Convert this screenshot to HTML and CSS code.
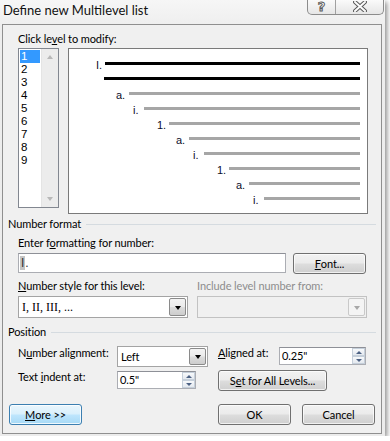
FILE: index.html
```html
<!DOCTYPE html>
<html>
<head>
<meta charset="utf-8">
<link rel="stylesheet" href="styles.css">
</head>
<body>
<div class="window">
  <div class="titlebar">
    <span class="title">Define new Multilevel list</span>
    <div class="caption">
      <div class="cap help">?</div>
      <div class="cap close">
        <svg width="14" height="11" viewBox="0 0 14 11">
          <path d="M2 1 L12 10 M12 1 L2 10" stroke="#5a5a5a" stroke-width="4" stroke-linecap="round"/>
          <path d="M2 1 L12 10 M12 1 L2 10" stroke="#fbfbfb" stroke-width="2" stroke-linecap="round"/>
        </svg>
      </div>
    </div>
  </div>
  <div class="client">
    <div class="lbl top-lbl">Click le<u>v</u>el to modify:</div>
    <div class="level-row">
      <div class="levels">
        <div class="items">
          <div class="it sel">1</div>
          <div class="it">2</div>
          <div class="it">3</div>
          <div class="it">4</div>
          <div class="it">5</div>
          <div class="it">6</div>
          <div class="it">7</div>
          <div class="it">8</div>
          <div class="it">9</div>
        </div>
        <div class="vscroll">
          <span class="tri up"></span>
          <span class="tri down"></span>
        </div>
      </div>
      <div class="preview">
        <div class="pl lv1"><span class="num">I.</span><span class="bar k"></span></div>
        <div class="pl lv2"><span class="bar k"></span></div>
        <div class="pl lv3"><span class="num">a.</span><span class="bar"></span></div>
        <div class="pl lv4"><span class="num">i.</span><span class="bar"></span></div>
        <div class="pl lv5"><span class="num">1.</span><span class="bar"></span></div>
        <div class="pl lv6"><span class="num">a.</span><span class="bar"></span></div>
        <div class="pl lv7"><span class="num">i.</span><span class="bar"></span></div>
        <div class="pl lv8"><span class="num">1.</span><span class="bar"></span></div>
        <div class="pl lv9"><span class="num">a.</span><span class="bar"></span></div>
        <div class="pl lv10"><span class="num">i.</span><span class="bar"></span></div>
      </div>
    </div>

    <div class="group-head g1"><span>Number format</span><span class="rule"></span></div>
    <div class="lbl fmt-lbl">Enter f<u>o</u>rmatting for number:</div>
    <div class="fmt-row">
      <div class="textbox"><span class="shade">I</span>.</div>
      <div class="btn font-btn"><u>F</u>ont...</div>
    </div>
    <div class="style-labels">
      <div class="lbl sl1"><u>N</u>umber style for this level:</div>
      <div class="lbl disabled">Include level number from:</div>
    </div>
    <div class="style-row">
      <div class="combo style-combo"><span class="val serif">I, II, III, ...</span><span class="dd"><span class="caret"></span></span></div>
      <div class="combo dis-combo"><span class="val"></span><span class="dd"><span class="caret"></span></span></div>
    </div>

    <div class="group-head g2"><span>Position</span><span class="rule"></span></div>
    <div class="pos-row ra">
      <div class="lbl l-align">N<u>u</u>mber alignment:</div>
      <div class="combo align-combo"><span class="val">Left</span><span class="dd"><span class="caret"></span></span></div>
      <div class="lbl l-at"><u>A</u>ligned at:</div>
      <div class="spin at-spin"><span class="val">0.25"</span><span class="spbtns"><span class="sp"><span class="stri up"></span></span><span class="sp"><span class="stri down"></span></span></span></div>
    </div>
    <div class="pos-row rb">
      <div class="lbl l-align">Text <u>i</u>ndent at:</div>
      <div class="spin ind-spin"><span class="val">0.5"</span><span class="spbtns"><span class="sp"><span class="stri up"></span></span><span class="sp"><span class="stri down"></span></span></span></div>
      <div class="btn all-btn">S<u>e</u>t for All Levels...</div>
    </div>
    <div class="bottom-row">
      <div class="btn more-btn"><u>M</u>ore &gt;&gt;</div>
      <div class="btn ok-btn">OK</div>
      <div class="btn cancel-btn">Cancel</div>
    </div>
  </div>
</div>
</body>
</html>
```

FILE: styles.css
```css
* { box-sizing: border-box; }
html, body { margin: 0; padding: 0; background: #ffffff; }
body {
  font-family: Lato, "Noto Sans", sans-serif;
  font-size: 11px;
  letter-spacing: -0.1px;
  color: #000;
}
u { text-decoration: underline; text-underline-offset: 1px; }

.window {
  width: 385px;
  height: 436px;
  background: linear-gradient(#f6f6f6, #ededed 30px, #ececec);
  box-shadow: 2px 2px 5px rgba(0,0,0,0.45);
  display: flex;
  flex-direction: column;
}

.titlebar {
  height: 24px;
  display: flex;
  align-items: flex-start;
}
.title {
  padding: 3px 0 0 3px;
  line-height: 15px;
  font-size: 13px;
  letter-spacing: 0;
  color: #111;
  text-shadow: 0 0 6px #fff;
}
.caption {
  margin-left: auto;
  margin-right: 1px;
  height: 15px;
  display: flex;
  border: 1px solid #8c8c8c;
  border-top: none;
  border-radius: 0 0 5px 5px;
  background: linear-gradient(#fafafa, #e6e6e6);
  overflow: hidden;
}
.cap { display: flex; align-items: center; justify-content: center; }
.cap.help {
  width: 28px;
  border-right: 1px solid #a0a0a0;
  font-family: "DejaVu Sans", sans-serif;
  font-weight: bold;
  font-size: 13px;
  line-height: 13px;
  color: #fbfbfb;
  -webkit-text-stroke: 1px #5a5a5a;
  padding-bottom: 2px;
}
.cap.close { width: 47px; padding-bottom: 2px; }

.client {
  margin-left: 2px;
  width: 380px;
  height: 410px;
  border: 1px solid #8f8f8f;
  background: #f0f0f0;
  display: flex;
  flex-direction: column;
}

.lbl { height: 14px; line-height: 14px; white-space: nowrap; }
.top-lbl { margin: 7px 0 0 15px; }

.level-row {
  display: flex;
  gap: 9px;
  margin: 2px 0 0 15px;
  align-items: flex-start;
}
.levels {
  width: 41px;
  height: 160px;
  border: 1px solid #828790;
  background: #fff;
  display: flex;
}
.items { width: 22px; padding: 1px; }
.it {
  width: 20px;
  height: 13px;
  line-height: 13px;
  padding-left: 1px;
  font-family: "Liberation Sans", Arial, sans-serif;
  font-size: 11.5px;
  letter-spacing: 0;
}
.it.sel { background: #3399ff; color: #fff; }
.vscroll {
  width: 17px;
  background: #ececec;
  border-left: 1px solid #e4e4e4;
  display: flex;
  flex-direction: column;
  justify-content: space-between;
  align-items: center;
  padding: 6px 0 6px;
}
.tri { width: 0; height: 0; border-left: 3.5px solid transparent; border-right: 3.5px solid transparent; }
.tri.up { border-bottom: 4px solid #b8b8b8; }
.tri.down { border-top: 4px solid #b8b8b8; }

.preview {
  width: 300px;
  height: 166px;
  border: 1px solid #7a7a7a;
  background: #fff;
  padding: 7px 7px 0 0;
  display: flex;
  flex-direction: column;
}
.pl { display: flex; align-items: center; height: 15px; }
.pl .num {
  font-family: "Liberation Sans", Arial, sans-serif;
  font-size: 11px;
  line-height: 11px;
  letter-spacing: 0;
  color: #0d0d2a;
  padding-top: 3px;
}
.bar { flex: 1; height: 3px; background: #a6a6a6; }
.bar.k { background: #000; }
.lv1 { padding-left: 27px; } .lv1 .num { width: 9px; }
.lv2 { padding-left: 35px; }
.lv3 { padding-left: 47px; } .lv3 .num { width: 13px; }
.lv4 { padding-left: 64px; } .lv4 .num { width: 11px; }
.lv5 { padding-left: 88px; } .lv5 .num { width: 12px; }
.lv6 { padding-left: 107px; } .lv6 .num { width: 13px; }
.lv7 { padding-left: 124px; } .lv7 .num { width: 11px; }
.lv8 { padding-left: 148px; } .lv8 .num { width: 12px; }
.lv9 { padding-left: 167px; } .lv9 .num { width: 13px; }
.lv10 { padding-left: 184px; } .lv10 .num { width: 11px; }

.group-head {
  display: flex;
  align-items: center;
  height: 14px;
  line-height: 14px;
  margin-left: 5px;
  margin-right: 5px;
}
.group-head .rule { flex: 1; height: 1px; background: #d5dbe0; margin-left: 5px; margin-top: 1px; }
.g1 { margin-top: 3px; }
.g2 { margin-top: 7px; }

.fmt-lbl { margin: 5px 0 0 15px; }
.fmt-row { display: flex; gap: 7px; margin: 3px 0 0 15px; align-items: flex-start; }
.textbox {
  width: 268px;
  height: 20px;
  border: 1px solid #abadb3;
  border-top-color: #8e9097;
  background: #fff;
  padding: 2px 0 0 1px;
  font-family: "Liberation Sans", Arial, sans-serif;
  font-size: 12px;
  letter-spacing: 0;
  line-height: 14px;
  color: #333;
}
.shade { background: #c4c4c4; padding: 0 1px; }

.btn {
  height: 21px;
  border: 1px solid #707070;
  border-radius: 3px;
  background: linear-gradient(#f2f2f2 0%, #ebebeb 48%, #dddddd 52%, #cfcfcf 100%);
  box-shadow: inset 0 0 0 1px rgba(255,255,255,0.7);
  display: flex;
  align-items: center;
  justify-content: center;
  line-height: 14px;
  white-space: nowrap;
}
.font-btn { width: 73px; }

.style-labels { display: flex; margin: 5px 0 0 15px; }
.sl1 { width: 179px; }
.disabled { color: #8d8d8d; }
.style-row { display: flex; gap: 9px; margin: 3px 0 0 15px; }

.combo {
  height: 22px;
  width: 170px;
  border: 1px solid #a4a4a4;
  background: #fff;
  display: flex;
  padding: 1px;
}
.combo .val { flex: 1; padding-left: 2px; line-height: 18px; }
.serif { font-family: "Liberation Serif", "Times New Roman", serif; font-size: 12px; letter-spacing: 0; }
.combo .dd {
  width: 17px;
  border: 1px solid #8a8a8a;
  border-radius: 2px;
  background: linear-gradient(#f3f3f3 0%, #ebebeb 48%, #dcdcdc 52%, #cdcdcd 100%);
  display: flex;
  align-items: center;
  justify-content: center;
}
.caret { width: 0; height: 0; border-left: 3.5px solid transparent; border-right: 3.5px solid transparent; border-top: 4px solid #000; margin-top: 1px; }
.dis-combo { border-color: #c2c2c2; background: #f0f0f0; }
.dis-combo .dd { border-color: #c9c9c9; background: #f4f4f4; }
.dis-combo .caret { border-top-color: #a8a8a8; }

.pos-row { display: flex; align-items: flex-start; margin-left: 15px; }
.ra { margin-top: 7px; height: 22px; }
.rb { margin-top: 2px; height: 21px; }
.pos-row .lbl { margin-top: 0; }
.l-align { width: 99px; }
.align-combo { width: 91px; height: 21px; }
.align-combo .val { line-height: 17px; }
.l-at { width: 61px; margin-left: 10px; }

.spin {
  height: 18px;
  margin-top: 1px;
  border: 1px solid #abadb3;
  border-top-color: #8e9097;
  background: #fff;
  display: flex;
}
.spin .val { flex: 1; padding-left: 2px; line-height: 16px; }
.at-spin { width: 87px; }
.ind-spin { width: 79px; }
.spbtns { width: 14px; display: flex; flex-direction: column; padding: 0 0 0 1px; }
.sp {
  flex: 1;
  border: 1px solid #c5cfda;
  background: linear-gradient(#f7f9fb, #e4e9ef);
  display: flex;
  align-items: center;
  justify-content: center;
}
.stri { width: 0; height: 0; border-left: 3px solid transparent; border-right: 3px solid transparent; }
.stri.up { border-bottom: 3px solid #4c6183; }
.stri.down { border-top: 3px solid #4c6183; }
.all-btn { width: 109px; margin-left: 22px; }

.bottom-row { display: flex; margin: 13px 0 0 6px; }
.more-btn {
  width: 73px;
  border-color: #3c7fb1;
  background: linear-gradient(#eaf6fd 0%, #d9f0fc 48%, #bee6fd 52%, #a7d9f5 100%);
  box-shadow: inset 0 0 0 1px rgba(255,255,255,0.8);
}
.ok-btn { width: 73px; margin-left: 136px; }
.cancel-btn { width: 73px; margin-left: 11px; }
```
